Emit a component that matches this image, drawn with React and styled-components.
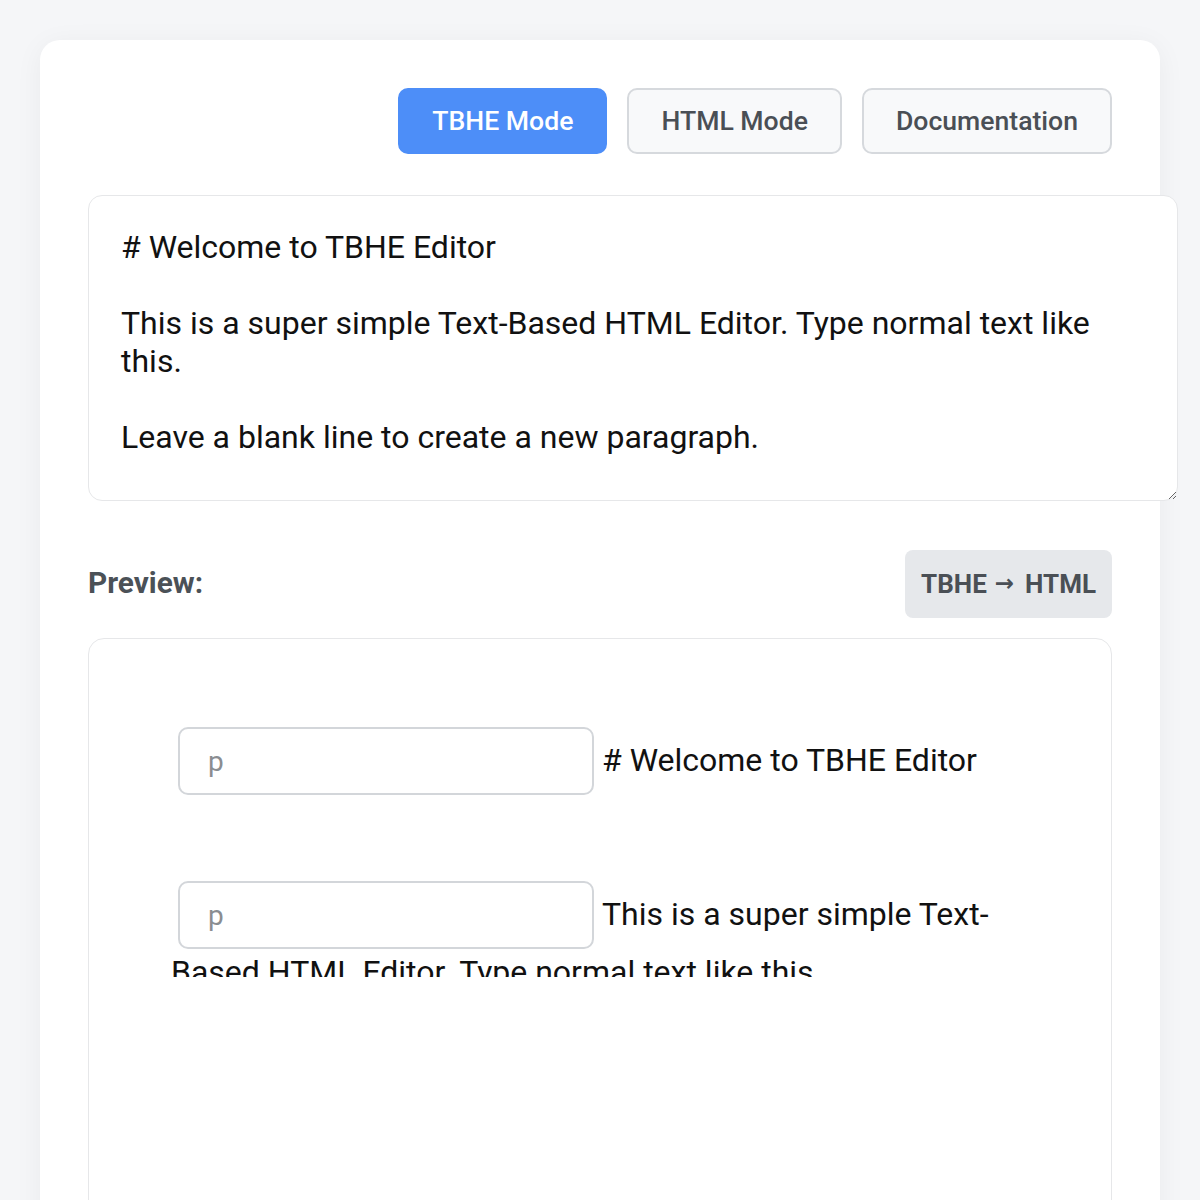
import React from "react";
import styled, { createGlobalStyle } from "styled-components";

const GlobalStyle = createGlobalStyle`
  html, body {
    margin: 0;
    padding: 0;
    background: #f5f6f8;
    font-family: Roboto, "Liberation Sans", Arial, sans-serif;
  }
  * { box-sizing: content-box; }
`;

const Page = styled.div`
  padding: 40px 40px 0;
  height: 1160px;
  overflow: hidden;
`;

const Card = styled.div`
  background: #ffffff;
  border-radius: 20px;
  box-shadow: 0 4px 28px rgba(15, 23, 42, 0.05);
  padding: 48px 48px 80px;
  min-height: 1200px;
`;

const Toolbar = styled.div`
  display: flex;
  justify-content: flex-end;
  gap: 20px;
  margin-bottom: 41px;
`;

const ModeButton = styled.button`
  font-family: Roboto, "Liberation Sans", Arial, sans-serif;
  font-size: 26.6px;
  font-weight: 500;
  line-height: 30px;
  padding: 16px 32px;
  border-radius: 10px;
  border: 2px solid ${(p) => (p.$active ? "#4d8ef8" : "#d6d9dd")};
  background: ${(p) => (p.$active ? "#4d8ef8" : "#f8f9fa")};
  color: ${(p) => (p.$active ? "#ffffff" : "#4a4f55")};
  cursor: pointer;
`;

const Editor = styled.textarea`
  display: block;
  width: 100%;
  height: 240px;
  padding: 32px;
  margin: 0 0 48px;
  border: 1px solid #e6e7e9;
  border-radius: 14px;
  font-family: Roboto, "Liberation Sans", Arial, sans-serif;
  font-size: 32px;
  line-height: 38px;
  color: #111111;
  background: #ffffff;
  outline: none;
  resize: both;
`;

const PreviewHeader = styled.div`
  display: flex;
  justify-content: space-between;
  align-items: center;
  margin-bottom: 20px;
`;

const PreviewLabel = styled.h3`
  margin: -2px 0 0;
  font-size: 29.8px;
  font-weight: 700;
  color: #4b5157;
`;

const ConvertButton = styled.button`
  font-family: Roboto, "Liberation Sans", Arial, sans-serif;
  font-size: 26px;
  font-weight: 700;
  line-height: 30px;
  padding: 19px 16px 18px;
  margin-top: 1px;
  border: none;
  border-radius: 8px;
  background: #e6e8eb;
  color: #4a4f55;
  cursor: pointer;
`;

const Arrow = styled.span`
  display: inline-block;
  margin: 0 11px 0 8px;
  font-family: "DejaVu Sans", sans-serif;
  font-weight: 700;
  font-size: 23px;
  line-height: 30px;
  position: relative;
  top: -2px;
`;

const PreviewBox = styled.div`
  border: 1px solid #e6e7e9;
  border-radius: 16px;
  padding: 88px 82px 240px;
`;

const Paragraph = styled.p`
  margin: 0 0 58px;
  height: 96px;
  overflow: hidden;
  font-size: 32px;
  line-height: 46px;
  color: #111111;
`;

const TagInput = styled.input`
  display: inline-block;
  vertical-align: baseline;
  width: 384px;
  height: 64px;
  padding: 0 0 0 28px;
  margin: 0 8px 0 7px;
  border: 2px solid #d3d6da;
  border-radius: 10px;
  font-family: Roboto, "Liberation Sans", Arial, sans-serif;
  font-size: 28px;
  color: #333;
  background: #ffffff;
  outline: none;
  &::placeholder { color: #8a8d91; }
`;

const source = `# Welcome to TBHE Editor

This is a super simple Text-Based HTML Editor. Type normal text like this.

Leave a blank line to create a new paragraph.`;

const blocks = [
  "# Welcome to TBHE Editor",
  "This is a super simple Text-Based HTML Editor. Type normal text like this.",
];

export default function App() {
  return (
    <>
      <GlobalStyle />
      <Page>
        <Card>
          <Toolbar>
            <ModeButton $active>TBHE Mode</ModeButton>
            <ModeButton>HTML Mode</ModeButton>
            <ModeButton>Documentation</ModeButton>
          </Toolbar>
          <Editor defaultValue={source} spellCheck={false} />
          <PreviewHeader>
            <PreviewLabel>Preview:</PreviewLabel>
            <ConvertButton>
              TBHE<Arrow>→</Arrow>HTML
            </ConvertButton>
          </PreviewHeader>
          <PreviewBox>
            {blocks.map((text) => (
              <Paragraph key={text}>
                <TagInput placeholder="p" />
                {text}
              </Paragraph>
            ))}
          </PreviewBox>
        </Card>
      </Page>
    </>
  );
}
